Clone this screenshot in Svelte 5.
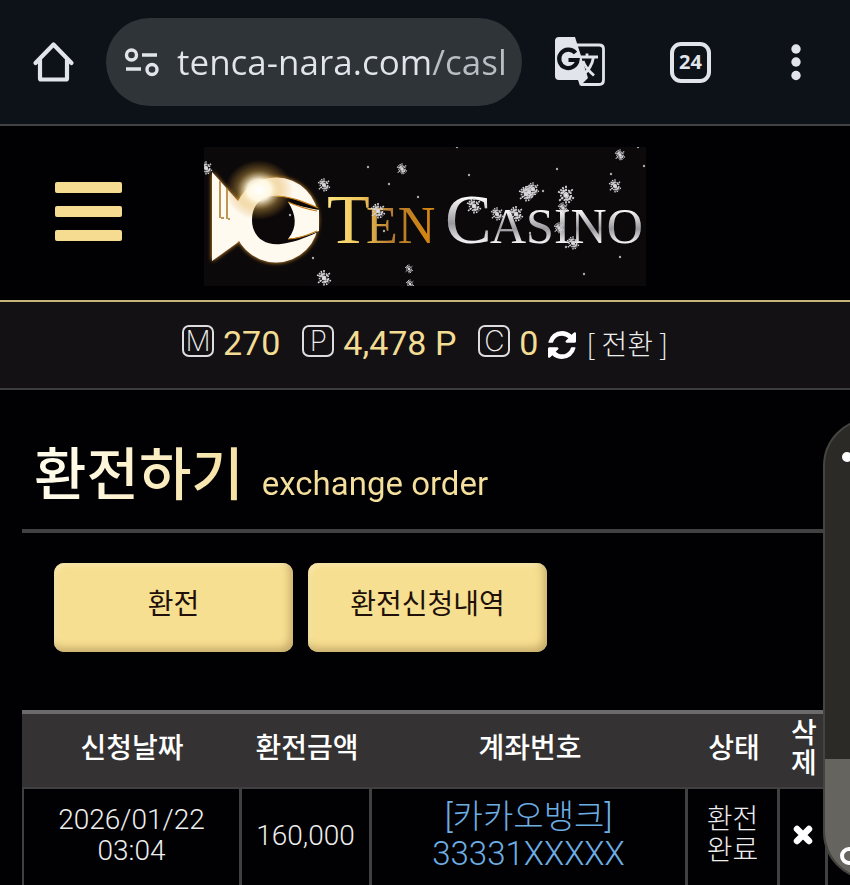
<script>
  let url = $state('tenca-nara.com/casl');

  const balances = [
    { mark: 'M', value: '270' },
    { mark: 'P', value: '4,478 P' },
    { mark: 'C', value: '0' },
  ];

  const orders = [
    {
      date: '2026/01/22',
      time: '03:04',
      amount: '160,000',
      bank: '[카카오뱅크]',
      account: '33331XXXXX',
      status: ['환전', '완료'],
    },
  ];

  const flakes = [
    [206, 168, 6], [324, 185, 6], [402, 169, 5], [378, 211, 7], [324, 278, 7],
    [409, 269, 4], [410, 284, 4], [474, 206, 7], [497, 214, 6], [516, 214, 7],
    [526, 194, 7], [533, 189, 6], [529, 192, 6], [566, 195, 8], [563, 208, 5],
    [559, 228, 5], [573, 243, 6], [620, 155, 5], [615, 186, 6],
  ];

  const specks = [
    [368, 167], [389, 184], [418, 197], [290, 215], [313, 258], [384, 231],
    [457, 147], [469, 175], [557, 169], [543, 191], [611, 174], [638, 147],
    [644, 166], [620, 257], [584, 274], [566, 247], [530, 233],
  ];
</script>

<div class="app">
  <div class="browser">
    <button class="icon home" aria-label="Home">
      <svg width="44" height="44" viewBox="0 0 44 44" fill="none" stroke="#e1e5eb" stroke-width="4.2" stroke-linejoin="round" stroke-linecap="round">
        <path d="M3.500 23 21.500 4.500 39.500 23M8 20V38.500Q8 39.500 9 39.500H34Q35 39.500 35 38.500V20" />
      </svg>
    </button>
    <div class="omnibox">
      <svg width="36" height="30" viewBox="0 0 36 30" fill="none" stroke="#e1e5eb" stroke-width="3.400">
        <circle cx="8.500" cy="8" r="5" /><path d="M19 8H34M3 22H18" /><circle cx="29" cy="22.500" r="5" />
      </svg>
      <input aria-label="Address" bind:value={url} spellcheck="false" />
    </div>
    <button class="icon translate" aria-label="Translate">
      <svg width="52" height="52" viewBox="0 0 52 52">
        <path d="M23 9H45Q49.500 9 49.500 13V44Q49.500 48.500 45 48.500H27" fill="none" stroke="#e1e5eb" stroke-width="2.800" />
        <path d="M5 1H21L34 42 26 50 24 44H5Q1 44 1 40V5Q1 1 5 1Z" fill="#e1e5eb" />
        <path d="M21.500 17A9.200 9.200 0 1 0 23.500 24H14.500" fill="none" stroke="#0d1118" stroke-width="4.200" />
        <path d="M28 22.500H38C37 28 34.500 31.500 32 34Z" fill="#0d1118" />
        <path d="M26 21H44M33 17.500V21M39.500 21C38.500 28 34 35 28.500 39.500M29 25C31 31 36 36 40 39.500" fill="none" stroke="#e1e5eb" stroke-width="2.800" />
      </svg>
    </button>
    <button class="icon tabs" aria-label="24 open tabs"><span>24</span></button>
    <button class="icon more" aria-label="More options">
      <svg width="12" height="38" viewBox="0 0 12 38" fill="#e1e5eb">
        <circle cx="6" cy="6" r="4.700" /><circle cx="6" cy="19" r="4.700" /><circle cx="6" cy="32.500" r="4.700" />
      </svg>
    </button>
  </div>

  <header>
    <button class="menu" aria-label="Menu"><i></i><i></i><i></i></button>
    <a class="logo" href="#home" aria-label="Ten Casino">
      <svg width="442" height="139" viewBox="204 147 442 139">
        <defs>
          <radialGradient id="flare">
            <stop offset="0" stop-color="#fff" /><stop offset=".35" stop-color="#fff8e0" stop-opacity=".95" />
            <stop offset=".65" stop-color="#e0b050" stop-opacity=".4" /><stop offset="1" stop-color="#d8901c" stop-opacity="0" />
          </radialGradient>
          <linearGradient id="gold" gradientUnits="userSpaceOnUse" x1="326" y1="0" x2="436" y2="0">
            <stop offset="0" stop-color="#ffe783" /><stop offset=".32" stop-color="#f0c65a" /><stop offset=".6" stop-color="#b57a2e" /><stop offset="1" stop-color="#d8890c" />
          </linearGradient>
          <linearGradient id="silver" x1="0" y1="0" x2="0" y2="1">
            <stop offset=".2" stop-color="#fff" /><stop offset=".55" stop-color="#99999d" /><stop offset=".8" stop-color="#f2f2f5" />
          </linearGradient>
          <filter id="glow" x="-20%" y="-20%" width="140%" height="140%">
            <feDropShadow dx="0" dy="0" stdDeviation="2.200" flood-color="#f0a020" />
          </filter>
          <g id="flake" stroke="#d0d0d3" stroke-width="1.600" fill="none">
            <path d="M-7-3 7 3M-3-7 3 7M-6 5 6-5M-5-5 5 5M0-8V8" stroke-dasharray="2 .7" />
            <circle r="4.500" stroke-dasharray="1.500 1" /><circle r="1.500" fill="#fff" />
          </g>
        </defs>
        <rect x="204" y="147" width="442" height="139" fill="#0c090b" />
        <g filter="url(#glow)" fill="#fffaf0">
          <path d="M212 172 237 200 250 215V228L237 243 212 261Z" />
          <circle cx="276" cy="220" r="42.500" />
        </g>
        <path d="M220 181V218M227 188V219M221 218h3M228 219h2" stroke="#a87524" stroke-width="1.500" />
        <path d="M274 196C289 196 302 201 318 208V232C303 239 294 242 281 244C264 246 252 236 252 220C252 205 261 196 274 196Z" fill="#0c080a" />
        <path d="M288 202C298 206 308 208 319 210V231C307 236 297 238 288 239C298 227 296 214 288 202Z" fill="#fffaf0" />
        <path d="M274 196C289 196 302 201 318 208M288 202C297 206 306 209 317 211M288 239C296 239 306 236 317 231" fill="none" stroke="#c27a14" stroke-width="1.200" />
        <ellipse cx="259" cy="190" rx="34" ry="30" fill="url(#flare)" />
        <g font-family="Liberation Serif, serif">
          <g fill="url(#gold)"><text x="327" y="243" font-size="70">T</text><text x="366" y="243" font-size="52">EN</text></g>
          <g fill="url(#silver)"><text x="445" y="243" font-size="70">C</text><text x="490" y="243" font-size="50">ASINO</text></g>
        </g>
        {#each flakes as [x, y, r]}
          <use href="#flake" transform="translate({x} {y}) scale({r / 7})" />
        {/each}
        {#each specks as [x, y]}<circle cx={x} cy={y} r="1.200" fill="#aaa" />{/each}
      </svg>
    </a>
  </header>

  <div class="balance">
    {#each balances as b}
      <span class="item"><b>{b.mark}</b><strong>{b.value}</strong></span>
    {/each}
    <button class="convert">
      <svg width="28" height="28" viewBox="0 0 1536 1536" fill="#fff" aria-hidden="true">
        <path d="M1511 928q0 5-1 7-64 268-268 434.500T764 1536q-146 0-282.500-55T238 1324l-129 129q-19 19-45 19t-45-19-19-45V960q0-26 19-45t45-19h448q26 0 45 19t19 45-19 45l-137 137q71 66 161 102t187 36q134 0 250-65t186-179q11-17 53-117 8-23 30-23h192q13 0 22.500 9.500t9.500 22.500zm25-800v448q0 26-19 45t-45 19h-448q-26 0-45-19t-19-45 19-45l138-138Q969 256 768 256q-134 0-250 65T332 500q-11 17-53 117-8 23-30 23H50q-13 0-22.500-9.500T18 608v-7q65-268 270-434.500T768 0q146 0 284 55.500T1297 212l130-129q19-19 45-19t45 19 19 45z" />
      </svg>
      <span>[ 전환 ]</span>
    </button>
  </div>

  <main>
    <h1>환전하기 <small>exchange order</small></h1>
    <div class="actions">
      <button>환전</button>
      <button>환전신청내역</button>
    </div>
    <table>
      <thead>
        <tr>
          <th class="date">신청날짜</th>
          <th class="amount">환전금액</th>
          <th>계좌번호</th>
          <th class="status">상태</th>
          <th class="delete">삭제</th>
        </tr>
      </thead>
      <tbody>
        {#each orders as o}
          <tr>
            <td>{o.date}<br />{o.time}</td>
            <td>{o.amount}</td>
            <td class="account">{o.bank}<br />{o.account}</td>
            <td>{o.status[0]}<br />{o.status[1]}</td>
            <td>
              <button class="remove" aria-label="삭제">
                <svg width="20" height="20" viewBox="0 0 20 20" stroke="#fff" stroke-width="6.500" stroke-linecap="round"><path d="M4 4 16 16M16 4 4 16" /></svg>
              </button>
            </td>
          </tr>
        {/each}
      </tbody>
    </table>
  </main>

  <aside aria-label="Edge panel">
    <span class="dot"></span>
    <div class="lower"><span class="ring"></span></div>
  </aside>
</div>

<style>
  :global(body) {
    background: #010002;
  }
  .app {
    position: relative;
    min-height: 100vh;
    overflow: hidden;
    color: #eee;
    font-family: Roboto, 'Noto Sans CJK KR', sans-serif;
    font-size: 28px;
    line-height: 30px;
  }
  .app * {
    box-sizing: border-box;
  }
  button {
    padding: 0;
    border: 0;
    background: none;
    color: inherit;
    font: inherit;
  }
  svg {
    display: block;
  }
  .browser {
    display: flex;
    align-items: center;
    height: 126px;
    padding: 0 48px 0 32px;
    border-bottom: 2px solid #414244;
    background: #0d1118;
  }
  .icon {
    display: grid;
    flex: none;
    place-items: center;
  }
  .omnibox {
    display: flex;
    flex: 1;
    align-items: center;
    min-width: 0;
    height: 88px;
    margin: 0 32px 0 30px;
    padding: 0 16px 0 17px;
    border-radius: 44px;
    background: #2e3438;
    gap: 18px;
  }
  .omnibox svg {
    flex: none;
  }
  input {
    flex: 1;
    min-width: 0;
    padding: 0;
    border: 0;
    outline: 0;
    background: linear-gradient(90deg, #e1e5eb 256px, #b9bec5 256px);
    background-clip: text;
    color: transparent;
    font: 35px / 48px 'Open Sans', sans-serif;
  }
  .tabs {
    width: 41px;
    height: 41px;
    margin-left: 64px;
    border: 4px solid #e1e5eb;
    border-radius: 11px;
    color: #e1e5eb;
    font: 700 20px / 30px 'Open Sans', sans-serif;
  }
  .more {
    margin-left: 79px;
  }
  header {
    display: grid;
    grid-template-columns: 1fr auto 1fr;
    align-items: center;
    height: 176px;
    border-bottom: 2px solid #c9b57c;
    padding: 6px 55px 0;
  }
  .menu {
    display: grid;
    width: 67px;
    margin-bottom: 10px;
    gap: 13px;
  }
  .menu i {
    height: 11px;
    border-radius: 2px;
    background: #f5dc90;
  }
  .balance {
    display: flex;
    align-items: center;
    justify-content: center;
    height: 88px;
    padding-bottom: 4px;
    border-bottom: 2px solid #3c3c3d;
    background: #131113;
  }
  .item {
    display: flex;
    align-items: center;
    margin-right: 22px;
    gap: 9px;
  }
  .item:nth-of-type(3) {
    margin-right: 10px;
  }
  .item b {
    width: 32px;
    height: 32px;
    margin-bottom: 5px;
    border: 2px solid #ddd;
    border-radius: 7px;
    font: 200 28px / 28px Inter, sans-serif;
    text-align: center;
  }
  .item strong {
    color: #f3dc94;
    font-size: 34px;
    font-weight: 400;
  }
  .convert {
    display: flex;
    align-items: center;
    font-weight: 300;
    font-family: 'Noto Sans CJK KR', sans-serif;
    gap: 10px;
  }
  .convert svg {
    margin-top: 4px;
  }
  main {
    padding: 0 22px;
  }
  h1 {
    display: flex;
    align-items: baseline;
    height: 143px;
    margin: 0;
    padding: 46px 12px 0;
    border-bottom: 4px solid #424142;
    font-size: 57px;
    font-weight: 500;
    line-height: 80px;
    gap: 18px;
    background: linear-gradient(100deg, #fffbe8 60px, #f5df9c 240px);
    background-clip: text;
    color: transparent;
  }
  small {
    font-size: 33px;
    font-weight: 400;
  }
  .actions {
    display: flex;
    padding: 30px 32px 58px;
    gap: 15px;
  }
  .actions button {
    width: 239px;
    height: 89px;
    padding-bottom: 5px;
    border-radius: 10px;
    background: #f7df91;
    box-shadow: inset -3px -4px 8px #c4a968, inset 2px 2px 5px #fff0bd;
    color: #211009;
  }
  table {
    width: 100%;
    border-collapse: separate;
    border-spacing: 0;
    table-layout: fixed;
    text-align: center;
  }
  th {
    height: 77px;
    padding: 0 10px 4px;
    border-top: 4px solid #6c6b6c;
    background: #343233;
    color: #fff;
    font-weight: 500;
    word-break: break-all;
  }
  .date { width: 220px; }
  .amount { width: 130px; }
  .status { width: 92px; }
  .delete { width: 48px; }
  td {
    height: 100px;
    padding: 0 0 6px;
    border-top: 2px solid #414041;
    border-right: 3px solid #414041;
    font-weight: 300;
    line-height: 31px;
  }
  tbody td:first-child {
    border-left: 2px solid #414041;
  }
  td.account {
    color: #6caee3;
    font-size: 33px;
    line-height: 37px;
  }
  .remove svg {
    margin: auto;
  }
  aside {
    position: absolute;
    top: 418px;
    right: -73px;
    width: 100px;
    height: 462px;
    overflow: hidden;
    border: 2px solid #444441;
    border-radius: 48px;
    background: #2b2a26;
  }
  .dot {
    position: absolute;
    top: 32px;
    left: 17px;
    width: 10px;
    height: 10px;
    border-radius: 50%;
    background: #fff;
  }
  .lower {
    position: absolute;
    inset: 339px 0 0;
    background: #65645f;
  }
  .ring {
    position: absolute;
    top: 88px;
    left: 15px;
    width: 18px;
    height: 18px;
    border: 4px solid #fff;
    border-radius: 50%;
  }
</style>
